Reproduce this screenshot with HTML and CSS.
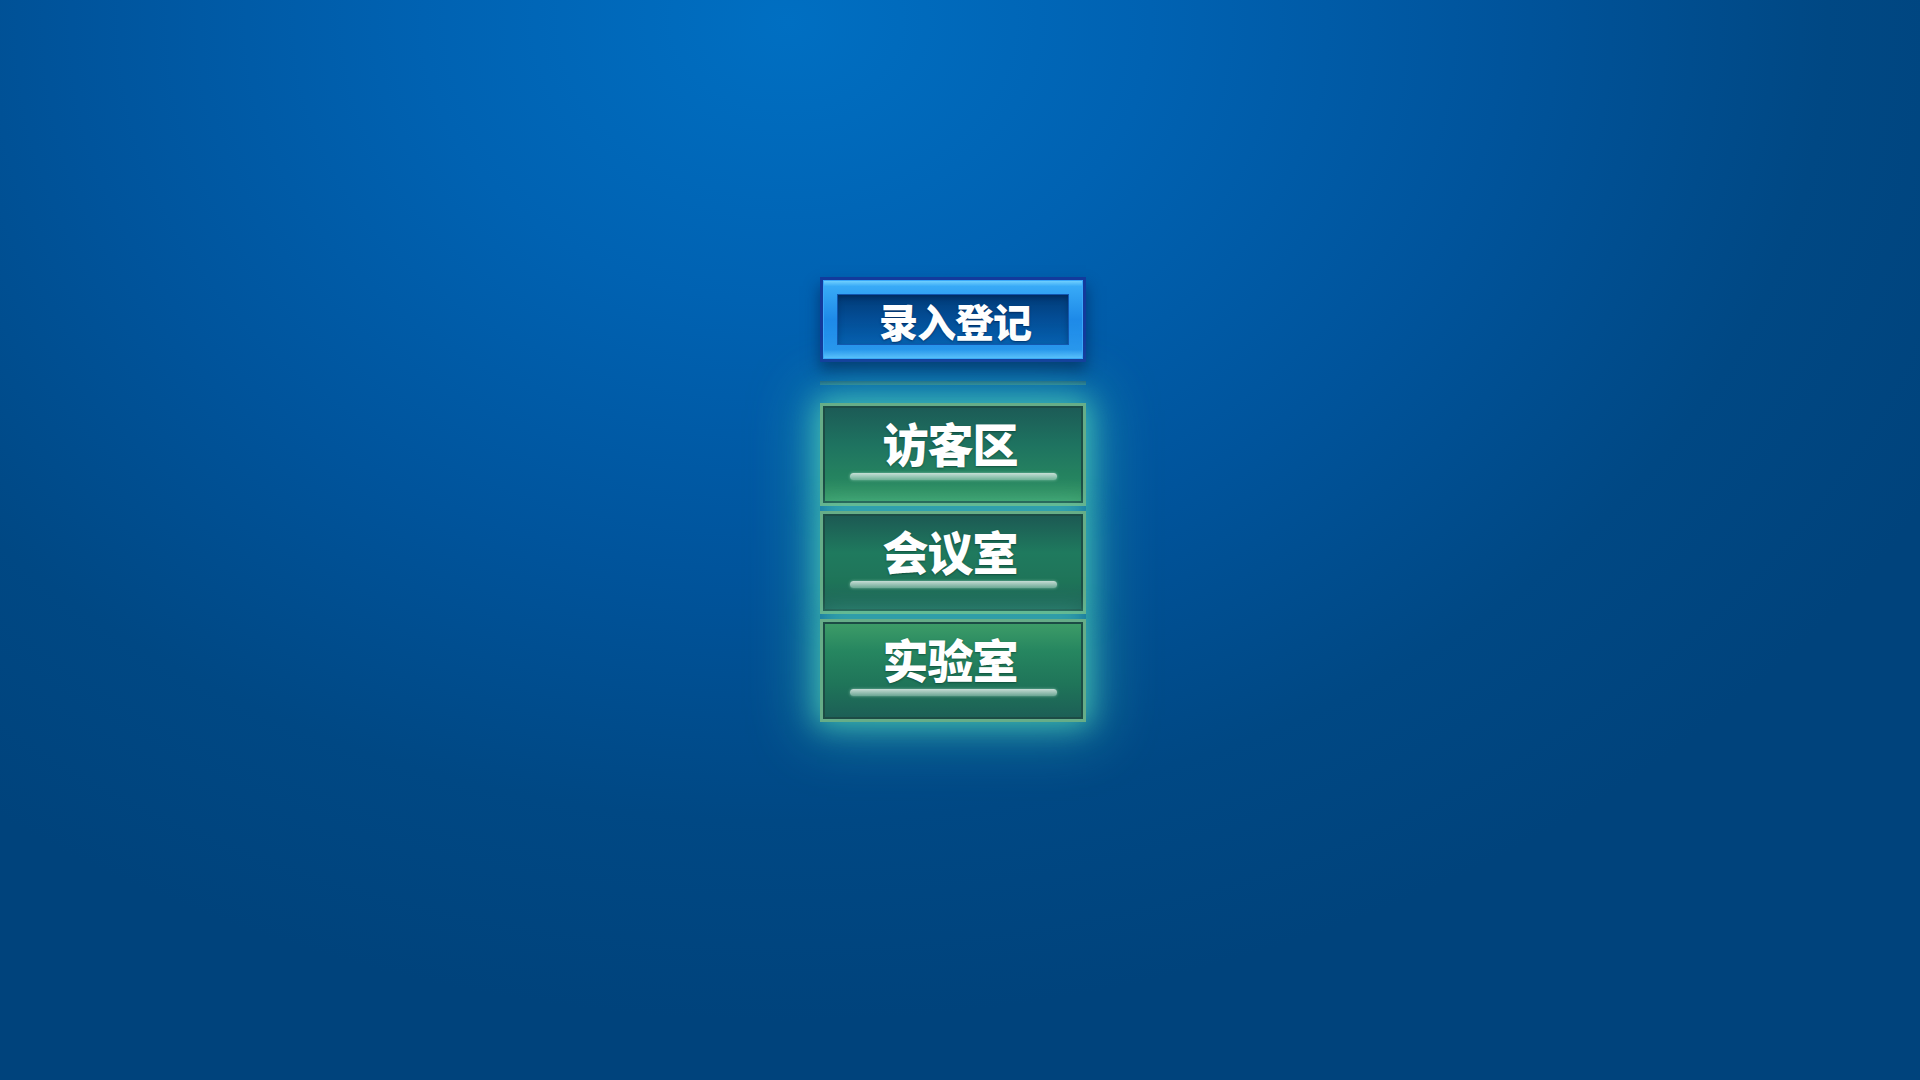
FILE: index.html
```html
<!DOCTYPE html>
<html lang="zh-CN">
<head>
<meta charset="utf-8">
<title>登记</title>
<link rel="stylesheet" href="styles.css">
</head>
<body>
<main class="stage">
  <div class="panel">
    <button class="btn-primary"><span class="btn-primary-inner">录入登记</span></button>
    <div class="divider"></div>
    <div class="rooms">
      <button class="room room-a"><span class="room-label">访客区</span><span class="room-gloss"></span></button>
      <button class="room room-b"><span class="room-label">会议室</span><span class="room-gloss"></span></button>
      <button class="room room-c"><span class="room-label">实验室</span><span class="room-gloss"></span></button>
    </div>
  </div>
</main>
</body>
</html>
```

FILE: styles.css
```css
html, body {
  margin: 0;
  padding: 0;
  height: 100%;
}
body {
  background:
    radial-gradient(ellipse 1300px 1000px at 41% 2%, #006fc2 0%, #0062b2 28%, #00549c 55%, #004884 80%, #00437c 100%);
  background-color: #00437c;
  font-family: "Noto Sans CJK SC", "Noto Sans", sans-serif;
  overflow: hidden;
}
.stage {
  height: 100vh;
  display: flex;
  justify-content: center;
  padding-top: 277px;
  box-sizing: border-box;
}
.panel {
  width: 266px;
  margin-left: -14px;
  display: flex;
  flex-direction: column;
}
button {
  font-family: inherit;
  cursor: pointer;
}
.btn-primary {
  height: 85px;
  box-sizing: border-box;
  padding: 14px;
  border: 3px solid #123a9c;
  background: linear-gradient(180deg, #7ad6ff 0%, #38aaf7 8%, #1e8ae8 50%, #2896ee 88%, #5fc4ff 100%);
  box-shadow: 0 9px 14px rgba(0, 25, 70, 0.55), inset 0 0 0 1px #3aa8fa;
  display: flex;
}
.btn-primary-inner {
  flex: 1;
  display: flex;
  align-items: center;
  justify-content: center;
  background: linear-gradient(180deg, #013b76 0%, #034c94 45%, #0660b0 100%);
  box-shadow: inset 0 0 0 1px #1156b0, inset 0 3px 6px rgba(0, 20, 60, 0.5);
  color: #ffffff;
  font-size: 39px;
  font-weight: 900;
  letter-spacing: -1px;
  padding-left: 4px;
  text-shadow: 0 1px 2px rgba(0, 20, 60, 0.6);
}
.divider {
  height: 4px;
  margin: 19px 0 18px;
  background: linear-gradient(180deg, #1d5a7c 0%, #2a7890 100%);
}
.rooms {
  display: flex;
  flex-direction: column;
  gap: 5px;
  box-shadow: 0 0 55px 12px rgba(70, 210, 185, 0.45);
}
.room {
  height: 103px;
  box-sizing: border-box;
  border: 3px solid #66ad88;
  box-shadow: inset 0 0 0 2px #1c4c45, 0 0 26px 3px rgba(90, 225, 185, 0.62);
  display: flex;
  flex-direction: column;
  align-items: center;
  padding: 9px 0 0;
  margin: 0;
  color: #ffffff;
}
.room-a {
  background: linear-gradient(180deg, #1c5a56 0%, #1e7360 40%, #268460 75%, #3c9a66 100%);
}
.room-b {
  background: linear-gradient(180deg, #1c5853 0%, #1f7a5e 40%, #1f7459 70%, #1d5f56 100%);
}
.room-c {
  background: linear-gradient(180deg, #3e9d68 0%, #268660 30%, #1f7459 65%, #1c5e56 100%);
}
.room-label {
  font-size: 46px;
  font-weight: 900;
  line-height: 54px;
  letter-spacing: -1px;
  margin-left: -6px;
  text-shadow: 0 1px 2px rgba(0, 40, 30, 0.5);
}
.room-gloss {
  width: 207px;
  height: 7px;
  margin-top: 4px;
  border-radius: 4px;
  background: linear-gradient(180deg, rgba(255, 255, 255, 0.75) 0%, rgba(200, 235, 220, 0.45) 100%);
  box-shadow: 0 0 3px rgba(220, 255, 240, 0.5);
  filter: blur(0.6px);
}
```
